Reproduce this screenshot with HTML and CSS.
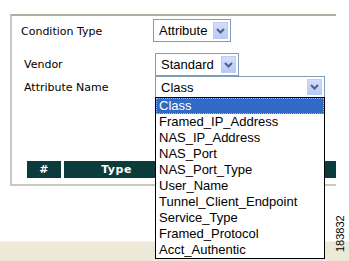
FILE: index.html
```html
<!DOCTYPE html>
<html lang="en">
<head>
    <meta charset="UTF-8">
    <title>Condition</title>
    <link rel="stylesheet" href="styles.css">
</head>
<body>
    <div class="page">
        <div class="panel">
            <div class="row-cond">
                <span class="label">Condition Type</span>
                <div class="select sel-attr">
                    <span class="sel-text">Attribute</span>
                    <span class="sel-btn"><svg width="9" height="6" viewBox="0 0 9 6"><path d="M1 1 L4.5 4.5 L8 1" fill="none" stroke="#4d6185" stroke-width="2"/></svg></span>
                </div>
            </div>
            <div class="group">
                <span class="label">Vendor</span>
                <div class="select sel-vendor">
                    <span class="sel-text">Standard</span>
                    <span class="sel-btn"><svg width="9" height="6" viewBox="0 0 9 6"><path d="M1 1 L4.5 4.5 L8 1" fill="none" stroke="#4d6185" stroke-width="2"/></svg></span>
                </div>
                <span class="label">Attribute Name</span>
                <div class="select sel-name">
                    <span class="sel-text">Class</span>
                    <span class="sel-btn"><svg width="9" height="6" viewBox="0 0 9 6"><path d="M1 1 L4.5 4.5 L8 1" fill="none" stroke="#4d6185" stroke-width="2"/></svg></span>
                </div>
            </div>
            <div class="grid-head">
                <div class="th th-num">#</div>
                <div class="th th-type">Type</div>
                <div class="th th-rest"></div>
            </div>
        </div>
        <div class="statusbar"></div>
    </div>

    <ul class="droplist">
        <li class="active">Class</li>
        <li>Framed_IP_Address</li>
        <li>NAS_IP_Address</li>
        <li>NAS_Port</li>
        <li>NAS_Port_Type</li>
        <li>User_Name</li>
        <li>Tunnel_Client_Endpoint</li>
        <li>Service_Type</li>
        <li>Framed_Protocol</li>
        <li>Acct_Authentic</li>
    </ul>
    <div class="fig-id">183832</div>
</body>
</html>
```

FILE: styles.css
```css
body, html{
    margin: 0;
    width: 349px;
    height: 261px;
    background: white;
    overflow: hidden;
}
.page{
    position: relative;
    height: 261px;
    display: flex;
    flex-direction: column;
    padding-top: 14px;
    box-sizing: border-box;
}
.panel{
    margin-left: 10px;
    width: 326px;
    height: 172px;
    box-sizing: border-box;
    border-top: 2px solid #b0b0a2;
    border-left: 2px solid #c8c8bc;
    border-bottom: 2px solid #c8c8bc;
    font-family: "DejaVu Sans", Verdana, sans-serif;
    font-size: 11px;
    color: black;
}
.label{
    display: block;
}
.row-cond{
    display: flex;
    align-items: center;
    margin-top: 3px;
    padding-left: 9px;
}
.row-cond .label{
    width: 132px;
    padding-top: 1px;
}
.group{
    display: grid;
    grid-template-columns: 131px auto;
    grid-template-rows: 23px 22px;
    align-items: center;
    margin-top: 11px;
    padding-left: 12px;
}
.select{
    box-sizing: border-box;
    border: 1px solid #7f9db9;
    background: white;
    display: flex;
    align-items: center;
    justify-content: space-between;
    padding: 2px;
    font-family: "Liberation Sans", Arial, sans-serif;
    font-size: 13px;
}
.sel-text{
    padding-left: 3px;
}
.sel-btn{
    width: 15px;
    height: 17px;
    box-sizing: border-box;
    border: 1px solid #bccdf5;
    background: linear-gradient(#d3defb, #b7c9f6);
    display: flex;
    align-items: center;
    justify-content: center;
}
.sel-attr{
    width: 78px;
    height: 23px;
}
.sel-vendor{
    width: 84px;
    height: 23px;
}
.sel-name{
    width: 170px;
    height: 22px;
    align-self: start;
}
.sel-name .sel-btn{
    height: 16px;
}
.grid-head{
    display: flex;
    gap: 3px;
    margin-top: 63px;
    margin-left: 15px;
    height: 17px;
}
.th{
    background: #0c3b3b;
    color: white;
    font-weight: bold;
    font-size: 11px;
    display: flex;
    align-items: center;
    justify-content: center;
    letter-spacing: 0.5px;
}
.th-num{
    width: 34px;
}
.th-type{
    width: 105px;
}
.th-rest{
    flex: 1;
}
.statusbar{
    margin-top: auto;
    height: 19px;
    background: #ece9d8;
    border-top: 1px solid #f4f3ea;
}
.droplist{
    position: absolute;
    left: 155px;
    top: 97px;
    width: 170px;
    height: 162px;
    box-sizing: border-box;
    margin: 0;
    padding: 0;
    list-style: none;
    border: 1px solid black;
    background: white;
    font-family: "Liberation Sans", Arial, sans-serif;
    font-size: 13px;
}
.droplist li{
    height: 16px;
    line-height: 16px;
    padding-left: 3px;
    box-sizing: border-box;
}
.droplist li.active{
    background: #316ac5;
    color: white;
    outline: 1px dotted #9fb7e0;
    outline-offset: -1px;
}
.fig-id{
    position: absolute;
    left: 334px;
    top: 252px;
    font-family: "Liberation Sans", Arial, sans-serif;
    font-size: 11px;
    transform: rotate(-90deg);
    transform-origin: 0 0;
    color: black;
}
```
